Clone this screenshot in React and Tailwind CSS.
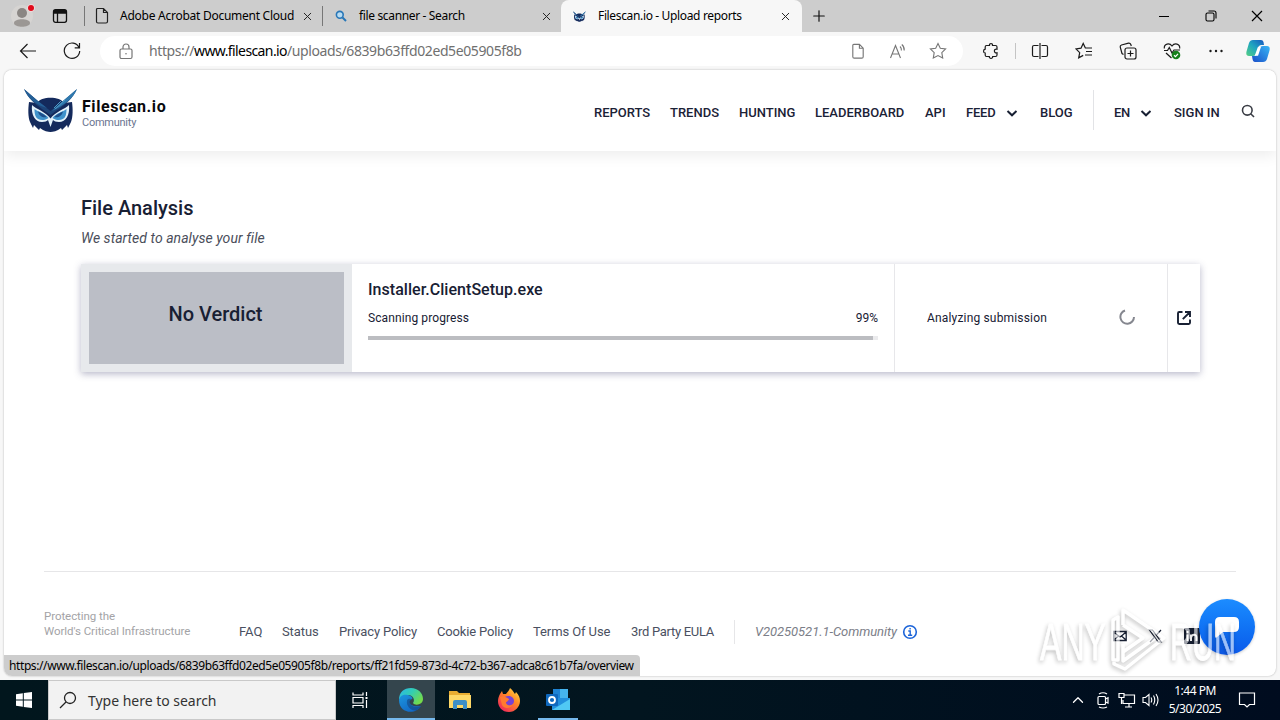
import React from 'react';
import { ChevronUp, Plus, X } from 'lucide-react';

const Owl = ({ className }) => (
  <svg className={className} viewBox="0 0 54 43" fill="none">
    <path d="M5 13 L13 14 C17 7 36 7 40 14 L48 13 C49 20 49 28 47 33 L44 39 L43 36 L38 41 L37 39 C33 42 29 43 26.5 43 C24 43 20 42 16 39 L15 41 L10 36 L9 39 L6 33 C4 28 4 20 5 13 Z" fill="#142a5c" />
    <path d="M0 0 C5 10 8 13 26.5 26 C45 13 48 10 53 0 L38 13 L26.5 22 L15 13 Z" fill="#1d4478" />
    <path d="M0 0 L14 12 L23 19 L17 17 C8 12 4 9 0 0 Z" fill="#245f96" />
    <path d="M53 0 L40 11 L28 22 C40 16 49 10 53 0 Z" fill="#2f79ae" />
    <path d="M41 11 L31 20 M37 12 L30 19" stroke="#4b9ac6" strokeWidth="1" />
    <path d="M8 16 C12 20 22 23 26.5 29.5 C31 23 41 20 45 16 C46 26 42 33 35 33 C32 33 30 32 29 31 L26.5 38 L24 31 C23 32 21 33 18 33 C11 33 7 26 8 16 Z" fill="#e4f2fa" />
    <path d="M10.5 20 C14 23 21 24 24.5 29 C21 32 13 32 11.5 27 C10.8 25 10.5 23 10.5 20 Z M42.5 20 C39 23 32 24 28.5 29 C32 32 40 32 41.500 27 C42.200 25 42.500 23 42.500 20 Z" fill="#3f92cb" />
    <path d="M14 22.500 C17 24 20 25 22.500 28 C19 29 15 27 14 22.500 Z M39 22.500 C36 24 33 25 30.500 28 C34 29 38 27 39 22.500 Z" fill="#1d4f8b" />
  </svg>
);

const Tab = ({ icon, title, className, titleClass }) => (
  <div className={`flex h-8 items-center ${className}`}>
    {icon}
    <span className={`flex-1 whitespace-nowrap text-[12px] leading-4 text-black ${titleClass}`}>{title}</span>
    <X className="h-[13px] w-[13px] text-[#222]" strokeWidth={1.8} />
  </div>
);

const PageIcon = ({ className }) => (
  <svg className={className} viewBox="0 0 16 18" fill="none" stroke="currentColor" strokeWidth="1.2">
    <path d="M3.5 1.5 h6 l4 4 v9 a1.5 1.5 0 0 1 -1.5 1.5 h-8 a1.5 1.5 0 0 1 -1.5 -1.5 v-12 a1 1 0 0 1 1 -1z M9.5 1.5 v4 h4" />
  </svg>
);

const TabStrip = () => (
  <div className="flex h-8 bg-[#cdcdcd]">
    <div className="flex w-[84px] items-center">
      <svg className="ml-[10px] h-7 w-7" viewBox="0 0 28 28">
        <circle cx="12" cy="14" r="11" fill="#d6d4d2" />
        <circle cx="12" cy="11" r="5" fill="#8a8683" />
        <path d="M4 21 c0-5 16-5 16 0 c0 5-16 5-16 0z" fill="#9b9794" />
        <circle cx="21" cy="6" r="3.8" fill="#f4dcdc" />
        <circle cx="21" cy="6" r="3" fill="#e00b1c" />
      </svg>
      <svg className="ml-[14px] h-4 w-4" viewBox="0 0 16 16" fill="none" stroke="#111" strokeWidth="1.3">
        <rect x="1.5" y="1.7" width="13" height="12.6" rx="2" />
        <path d="M1.5 5 h13 M5.5 5 v9" />
        <path d="M2 3.5 h12" strokeWidth="3" />
      </svg>
    </div>
    <div className="my-[6px] w-px bg-[#777]" />
    <Tab
      className="w-[237px] pl-[9px] pr-[8px]"
      titleClass="ml-[10px] tracking-[-0.26px]"
      title="Adobe Acrobat Document Cloud"
      icon={<PageIcon className="h-[18px] w-4 text-[#222]" />}
    />
    <div className="my-[6px] w-px bg-[#777]" />
    <Tab
      className="w-[237px] pl-[12px] pr-[7px]"
      titleClass="ml-[12px] tracking-[-0.35px]"
      title="file scanner - Search"
      icon={
        <svg className="h-3 w-3" viewBox="0 0 12 12" fill="#b9dcf2" stroke="#2877b8" strokeWidth="1.6">
          <circle cx="4.8" cy="4.8" r="3.4" />
          <path d="M7.5 7.5 L11 11" strokeWidth="2" />
        </svg>
      }
    />
    <Tab
      className="ml-px w-[241px] rounded-t-lg bg-[#f7f7f7] pl-[12px] pr-[10px]"
      titleClass="ml-[12px] tracking-[-0.35px]"
      title="Filescan.io - Upload reports"
      icon={<Owl className="h-[11px] w-[13px]" />}
    />
    <div className="flex flex-1 items-center justify-between pl-[8px]">
      <Plus className="h-[18px] w-[18px] text-[#111]" strokeWidth={1.6} />
      <div className="flex w-[122px] items-center justify-between pr-[17px] text-black">
        <svg className="h-3 w-3" viewBox="0 0 12 12" stroke="currentColor"><path d="M1 6.5 h10" /></svg>
        <svg className="h-3 w-3" viewBox="0 0 12 12" fill="none" stroke="currentColor" strokeWidth="1.1">
          <rect x="1" y="3" width="8" height="8" rx="1.5" />
          <path d="M3.5 1 h5.5 a2 2 0 0 1 2 2 v5.5" />
        </svg>
        <svg className="h-3 w-3" viewBox="0 0 12 12" stroke="currentColor" strokeWidth="1.2"><path d="M1 1 L11 11 M11 1 L1 11" /></svg>
      </div>
    </div>
  </div>
);

const STAR = 'M9 1.5 L11.3 6.3 L16.6 7 L12.8 10.7 L13.7 16 L9 13.5 L4.3 16 L5.2 10.7 L1.4 7 L6.7 6.3 Z';

const Toolbar = () => (
  <div className="flex h-[38px] items-center bg-[#f7f7f7] text-[#1b1b1b]">
    <svg className="ml-[19px] h-[18px] w-[18px]" viewBox="0 0 18 18" fill="none" stroke="currentColor" strokeWidth="1.2">
      <path d="M17 9 H1.5 M8.5 2 L1.5 9 L8.5 16" />
    </svg>
    <svg className="ml-[26px] h-[18px] w-[18px]" viewBox="0 0 18 18" fill="none" stroke="currentColor" strokeWidth="1.2">
      <path d="M16 5.5 A7.7 7.7 0 1 0 16.7 9 M16.5 1 V5.8 H11.7" />
    </svg>
    <div className="ml-[19px] flex h-[30px] w-[863px] items-center rounded-full bg-white text-[#767676]">
      <svg className="ml-[18px] h-[17px] w-4" viewBox="0 0 16 17" fill="none" stroke="currentColor" strokeWidth="1.2">
        <rect x="2" y="6" width="12" height="9.5" rx="1.5" />
        <path d="M5 6 V4 a3 3 0 0 1 6 0 V6" />
        <circle cx="8" cy="10.8" r="0.8" fill="currentColor" stroke="none" />
      </svg>
      <span className="ml-[15px] w-[372px] whitespace-nowrap text-[14px] leading-5 tracking-[-0.4px] text-[#707070]">
        https://<span className="tracking-[-0.6px] text-black">www.filescan.io</span>/uploads/6839b63ffd02ed5e05905f8b
      </span>
      <div className="ml-auto mr-[16px] flex items-center">
        <PageIcon className="h-[17px] w-4" />
        <svg className="ml-[23px] h-[18px] w-[18px]" viewBox="0 0 18 18" fill="none" stroke="currentColor" strokeWidth="1.1">
          <path d="M1.5 16 L6.5 3.5 L11.5 16 M3.2 12 h6.6 M11 4.5 q1.6 1.5 1.4 4 M12.8 2.500 q2.8 2.4 2.4 6" />
        </svg>
        <svg className="ml-[22px] h-[18px] w-[18px]" viewBox="0 0 18 18" fill="none" stroke="currentColor" strokeWidth="1.1"><path d={STAR} /></svg>
      </div>
    </div>
    <svg className="ml-[19px] h-[18px] w-[18px]" viewBox="0 0 18 18" fill="none" stroke="currentColor" strokeWidth="1.2">
      <path d="M4.5 3.5 H7.5 C7 0.8 11 0.8 10.5 3.5 H13.5 Q15 3.5 15 5 V7.2 C11.5 6.5 11.5 11.5 15 10.8 V13 Q15 14.5 13.5 14.5 H10.7 C11 17 7 17 7.3 14.5 H4.5 Q3.2 14.5 3.2 13 V11 C1 11 1 7.5 3.2 7.2 V5 Q3.2 3.5 4.5 3.5 Z" />
    </svg>
    <div className="ml-[15px] h-4 w-px bg-[#c4c4c4]" />
    <svg className="ml-[15px] h-[18px] w-[18px]" viewBox="0 0 18 18" fill="none" stroke="currentColor" strokeWidth="1.2">
      <path d="M7.5 3.5 H3 Q1.5 3.5 1.5 5 V13 Q1.5 14.5 3 14.5 H7.5 M10.5 3.5 H15 Q16.5 3.5 16.5 5 V13 Q16.5 14.5 15 14.5 H10.5 M9 1 V17" />
    </svg>
    <svg className="ml-[26px] h-[18px] w-[18px]" viewBox="0 0 18 18" fill="none" stroke="currentColor" strokeWidth="1.2">
      <path d="M10.5 6.2 L8.2 1.5 L6 6.2 L1 7 L4.7 10.6 L3.7 15.8 L8.2 13.4 M10 6 H17 M11 9.5 H17 M10 13 H17" />
    </svg>
    <svg className="ml-[26px] h-[18px] w-[18px]" viewBox="0 0 18 18" fill="none" stroke="currentColor" strokeWidth="1.2">
      <rect x="6" y="6" width="11" height="11" rx="2" />
      <path d="M11.5 8.5 v6 M8.5 11.5 h6 M4.5 12.5 L3 11.5 L1.2 5 Q1 3.5 2.5 3 L9.5 1.2 Q11.3 1 11.8 2.5 L12.3 4" />
    </svg>
    <svg className="ml-[26px] h-[18px] w-[18px]" viewBox="0 0 18 18" fill="none" stroke="currentColor" strokeWidth="1.2">
      <path d="M1.3 6.5 C0.8 1.5 6.5 0.5 9 4 C11.5 0.5 17.2 1.5 16.7 6.5 M1 8.5 H4.5 L6.3 5.5 L9 11 L11 8 H17 M3 11 L8.5 16" />
      <circle cx="13" cy="13" r="4.3" fill="#16801b" stroke="none" />
      <path d="M11 13.2 L12.5 14.6 L15 11.8" stroke="#fff" />
    </svg>
    <svg className="ml-[27px] h-[18px] w-4" viewBox="0 0 16 18" fill="currentColor">
      <circle cx="2.5" cy="9" r="1.2" /><circle cx="8" cy="9" r="1.2" /><circle cx="13.5" cy="9" r="1.2" />
    </svg>
    <svg className="ml-[22px] h-6 w-6" viewBox="0 0 24 24">
      <defs>
        <linearGradient id="cpA" x1="0" y1="1" x2="1" y2="0"><stop stopColor="#55cf83" /><stop offset=".5" stopColor="#1fa6c0" /><stop offset="1" stopColor="#1756c0" /></linearGradient>
        <linearGradient id="cpB" x1="0" y1="1" x2="1" y2="0"><stop stopColor="#1b4fc9" /><stop offset="1" stopColor="#38b6f5" /></linearGradient>
      </defs>
      <path d="M7 1 H15 Q17 1 17.5 3 L18 6 H15 Q13 6 12 9 L10.5 14 Q9.5 17 7 17 H3 Q-.5 17 .5 12.5 L3 4 Q4 1 7 1Z" fill="url(#cpA)" />
      <path d="M17 23 H9 Q7 23 6.5 20 L6 17 H8 Q11 17 12 14 L13.5 9 Q14.5 7 17 7 H21 Q24.5 7 23.5 11.5 L21 20 Q20 23 17 23Z" fill="url(#cpB)" />
      <path d="M12.500 8.500 H14 L11.500 16 H9.800 Z" fill="#fff" stroke="#fff" strokeWidth="1.500" />
    </svg>
  </div>
);

const Chevron = ({ className }) => (
  <svg className={`h-3 w-3 ${className}`} viewBox="0 0 12 12" fill="none" stroke="#182033" strokeWidth="2"><path d="M1.5 4 L6 8.3 L10.5 4" /></svg>
);

const SiteHeader = () => (
  <header className="flex h-[81px] items-start bg-white pl-5 shadow-[0_4px_14px_rgba(0,0,0,0.08)]">
    <Owl className="mt-[19px] h-[43px] w-[54px]" />
    <div className="ml-[4px] mt-[27px] font-['Roboto',sans-serif]">
      <div className="text-[16px] leading-[20px] font-bold tracking-[0.58px] text-[#08090d]">Filescan.io</div>
      <div className="text-[11px] leading-[11px] tracking-[-0.25px] text-[#6b7590]">Community</div>
    </div>
    <nav className="ml-auto mt-5 flex h-10 items-center pr-[21px] font-['Roboto',sans-serif] text-[13px] font-medium whitespace-nowrap text-[#1b2236]">
      <span className="mt-[6px] w-[76px]">REPORTS</span>
      <span className="mt-[6px] w-[69px]">TRENDS</span>
      <span className="mt-[6px] w-[76px]">HUNTING</span>
      <span className="mt-[6px] w-[110px]">LEADERBOARD</span>
      <span className="mt-[6px] w-[41px]">API</span>
      <span className="mt-[6px] w-[40px] tracking-[-0.2px]">FEED</span>
      <Chevron className="mt-[5px] mr-[22px]" />
      <span className="mt-[6px] w-[53px]">BLOG</span>
      <div className="h-10 w-px bg-[#e2e3e6]" />
      <span className="mt-[6px] ml-5 w-[26px] tracking-[-0.3px]">EN</span>
      <Chevron className="mt-[5px] mr-[22px]" />
      <span className="mt-[6px] w-[67px]">SIGN IN</span>
      <svg className="mt-[2px] h-[14px] w-[14px]" viewBox="0 0 14 14" fill="none" stroke="#3a3d45" strokeWidth="1.6">
        <circle cx="6.3" cy="6.3" r="4.8" /><path d="M9.7 9.7 L13 13" />
      </svg>
    </nav>
  </header>
);

const AnalysisCard = () => (
  <section className="ml-[77px] mt-[16px] flex h-[108px] w-[1119px] bg-white shadow-[0_2px_7px_rgba(50,50,100,0.35)]">
    <div className="w-[271px] bg-[#e7e9ec] p-2">
      <div className="flex h-[92px] items-center justify-center bg-[#bbbec6] pr-[2px] pb-2 text-[20px] font-medium text-[#182033]">No Verdict</div>
    </div>
    <div className="w-[542px] px-4 pt-4 text-[#182033]">
      <div className="text-[16px] leading-5 font-medium tracking-[0.04px] whitespace-nowrap">Installer.ClientSetup.exe</div>
      <div className="mt-[10px] flex justify-between text-[12px] leading-4">
        <span className="tracking-[0.1px]">Scanning progress</span>
        <span>99%</span>
      </div>
      <div className="mt-[10px] h-1 bg-[#ebebed]">
        <div className="h-1 w-[99%] bg-[#bcbdc1]" />
      </div>
    </div>
    <div className="flex w-[273px] items-center justify-between border-l border-[#e7e7ea] px-8 text-[12px] text-[#182033]">
      <span className="tracking-[0.17px] whitespace-nowrap">Analyzing submission</span>
      <svg className="mb-[3px] h-4 w-4" viewBox="0 0 16 16" fill="none" stroke="#85878f" strokeWidth="2">
        <path d="M6 1.5 A6.800 6.800 0 1 0 15 8" />
      </svg>
    </div>
    <div className="flex flex-1 items-center justify-center border-l border-[#e7e7ea]">
      <svg className="h-4 w-4" viewBox="0 0 16 16" fill="none" stroke="#182033" strokeWidth="1.9">
        <path d="M6.5 2 H3.2 Q2 2 2 3.2 V12.8 Q2 14 3.2 14 H12.8 Q14 14 14 12.8 V9.5 M9 2 H14 V7 M14 2 L6.8 9.2" />
      </svg>
    </div>
  </section>
);

const Footer = () => (
  <footer className="mx-10 mt-auto flex h-[105px] border-t border-[#e6e6e8] font-['Roboto',sans-serif] text-[13px] whitespace-nowrap text-[#4a5061]">
    <div className="mt-[37px] w-[195px] text-[11.5px] leading-[15px] tracking-[-0.06px] text-[#a3a3a6]">
      Protecting the
      <br />
      World's Critical Infrastructure
    </div>
    <div className="mt-[48px] flex h-6 items-center">
      <span className="w-[43px]">FAQ</span>
      <span className="w-[57px] tracking-[-0.1px]">Status</span>
      <span className="w-[98px] tracking-[-0.15px]">Privacy Policy</span>
      <span className="w-[96px] tracking-[-0.15px]">Cookie Policy</span>
      <span className="w-[98px] tracking-[-0.1px]">Terms Of Use</span>
      <span className="w-[103px] tracking-[-0.3px]">3rd Party EULA</span>
      <div className="h-6 w-px bg-[#e6e6e8]" />
      <span className="ml-5 w-[147px] tracking-[-0.06px] text-[#7b7e88] italic">V20250521.1-Community</span>
      <svg className="h-4 w-4" viewBox="0 0 16 16" fill="none" stroke="#1c64d8">
        <circle cx="8" cy="8" r="6.3" strokeWidth="1.6" />
        <path d="M6.3 7 H8.2 V11 M6 11.2 H10.2 M8.1 4 V5.5" strokeWidth="1.4" />
      </svg>
    </div>
    <div className="mt-[56px] ml-auto mr-[36px] flex h-4 items-center">
      <svg className="mr-[21px] h-[14px] w-[14px]" viewBox="0 0 14 14" fill="none" stroke="#182033" strokeWidth="1.3">
        <path d="M.8 2.5 H13.2 V11.5 H.8 Z M1 3 L5.500 7 L1 11 M13 3 L8.500 7 L13 11 M5 6.500 L7 8 L9 6.500" />
      </svg>
      <svg className="mr-[21px] h-[14px] w-[15px]" viewBox="0 0 15 14" fill="none" stroke="#182033" strokeWidth="1.2">
        <path d="M1.5 1 H4.5 L13.2 13 H10.2 Z M13 1 L8.4 6 M6.6 8 L2 13" />
      </svg>
      <svg className="h-4 w-4" viewBox="0 0 16 16">
        <rect width="16" height="16" rx="1" fill="#182033" />
        <path d="M3.5 6.5 V13 M3.5 3 V5 M7 13 V6.5 M7 10 C7 6 12.5 5.5 12.5 9.5 V13" fill="none" stroke="#fff" strokeWidth="2" />
      </svg>
    </div>
  </footer>
);

const ChatButton = () => (
  <div className="absolute right-[21px] bottom-[21px] flex h-14 w-14 items-center justify-center rounded-full bg-linear-to-b from-[#1c8cff] to-[#0d59ea] shadow-[0_1px_3px_rgba(0,0,0,0.2)]">
    <svg className="h-6 w-6" viewBox="0 0 24 24" fill="#fff">
      <path d="M5 2 H19 Q24 2 24 7 V12 Q24 17 19 17 H8 L1.500 22.500 Q0 23.500 0 21 V7 Q0 2 5 2Z" />
    </svg>
  </div>
);

const Watermark = () => (
  <div className="pointer-events-none absolute right-[26px] bottom-0 flex h-[74px] w-[212px] items-center opacity-60 drop-shadow-[-1px_2px_2px_rgba(0,0,0,0.4)]">
    <svg className="h-[74px] w-[212px]" viewBox="0 0 212 74">
      <g fill="#fff" stroke="#fff" strokeWidth="0.8" fontFamily="Liberation Sans" fontSize="52">
        <text x="2" y="58" textLength="66" lengthAdjust="spacingAndGlyphs">ANY</text>
        <text x="132" y="58" textLength="66" lengthAdjust="spacingAndGlyphs">RUN</text>
      </g>
      <path d="M75 58 V18 L80 15 V58 Z M85 23 V8 L126 36 L87 67 L76 62 V60 M85 23 L105 36 L85 50 V42 M85 50 V59 L117 36" fill="none" stroke="#fff" strokeWidth="3.5" strokeLinejoin="round" />
    </svg>
  </div>
);

const EdgeLogo = () => (
  <svg className="h-6 w-6" viewBox="0 0 24 24">
    <defs>
      <linearGradient id="edA" x1="0" y1="0" x2="1" y2="0.6"><stop stopColor="#2bb5ed" /><stop offset=".5" stopColor="#32cdb4" /><stop offset="1" stopColor="#74db4b" /></linearGradient>
      <linearGradient id="edB" x1="0" y1="0" x2="0.7" y2="1"><stop stopColor="#1c96de" /><stop offset="1" stopColor="#1266c4" /></linearGradient>
    </defs>
    <path d="M0 12 C0 4 5 0 12 0 C19 0 24 5 24 11 C24 17 16 18 14 15 C16 13 15 7 9 7 C4 7 1 10 0 12Z" fill="url(#edA)" />
    <path d="M0 12 C1 7 5 6 9 7 C13 8 14 10 13 11 C8 13 11 20 22 18 C17 27 0 26 0 12Z" fill="url(#edB)" />
    <path d="M8 13 C7 18 12 23 17 22.5 C20 21 22 19 22 18 C14 21 9 16 12 11 C9 10 8 12 8 13Z" fill="#153f78" opacity=".55" />
  </svg>
);

const Taskbar = () => (
  <div className="flex h-10 items-stretch bg-linear-to-r from-[#01161d] via-[#02151f] to-[#000c1f] text-white">
    <div className="flex w-12 items-center justify-center">
      <svg className="h-4 w-4" viewBox="0 0 16 16" fill="#fff">
        <path d="M0 2.2 L6.8 1.2 V7.5 H0Z M7.8 1 L16 0 V7.5 H7.8Z M0 8.5 H6.8 V14.8 L0 13.8Z M7.8 8.5 H16 V16 L7.8 15Z" />
      </svg>
    </div>
    <div className="flex w-[288px] items-center border border-[#c9c9c9] bg-[#f2f2f2] pl-[10px] text-[#222]">
      <svg className="h-[18px] w-[18px]" viewBox="0 0 18 18" fill="none" stroke="#222" strokeWidth="1.3">
        <circle cx="11" cy="7" r="5.5" /><path d="M7 11 L1 17" />
      </svg>
      <span className="ml-[11px] text-[14px] tracking-[-0.02px] text-[#333]">Type here to search</span>
    </div>
    <div className="flex w-[51px] items-center justify-center pr-[3px]">
      <svg className="h-[18px] w-[18px]" viewBox="0 0 18 18" fill="none" stroke="#fff" strokeWidth="1.2">
        <path d="M2 1.5 V4 H12 V1.5 M2 6.5 H12 V12 H2 Z M2 17 V14.5 H12 V17 M15.5 1 V5 M15.5 9 V17" />
        <rect x="14.5" y="6" width="2" height="2" fill="#fff" stroke="none" />
      </svg>
    </div>
    <div className="flex w-12 items-center justify-center border-b-2 border-[#76b9ed] bg-[#34454d] pt-[2px]"><EdgeLogo /></div>
    <div className="flex w-[49px] items-center justify-center">
      <svg className="h-5 w-6" viewBox="0 0 24 20">
        <path d="M1 1 H9 L11 3 H22 V18 H1 Z" fill="#e9ad32" />
        <path d="M1 5 H23 V18 H1 Z" fill="#fed867" />
        <path d="M5 19 V12 Q5 10 7 10 H17 Q19 10 19 12 V19 H15 V15 H9 V19 Z" fill="#3e8fc6" />
      </svg>
    </div>
    <div className="flex w-[49px] items-center justify-center">
      <svg className="h-6 w-6" viewBox="0 0 24 24">
        <defs><linearGradient id="ffA" x1="1" y1="0" x2="0.2" y2="1"><stop stopColor="#ffe64a" /><stop offset=".45" stopColor="#ff8a25" /><stop offset="1" stopColor="#f0255d" /></linearGradient></defs>
        <path d="M3 6 L5 3 L6 6 L9 6 C10 4 12 3 13 0 C16 2 17 5 18 6 L19 4 C22 7 23 10 23 13 C23 19 18 24 12 24 C5 24 1 19 1 13 C1 10 2 8 3 6Z" fill="url(#ffA)" />
        <path d="M8 9 C11 7 17 8 17 13 C17 17 12 19 9 17 C7 15 8 14 11 13 L8 11Z" fill="#7542d5" />
        <path d="M3 9 C6 7 9 9 12 11 C12 13 9 13 9 15 C10 18 14 18 16 16 C14 21 7 21 5 17 Z" fill="#ff7a30" />
      </svg>
    </div>
    <div className="flex w-[50px] flex-col items-center justify-between pt-[9px]">
      <svg className="h-[22px] w-6" viewBox="0 0 24 22">
        <path d="M7 0 H22 V10 H7 Z" fill="#1e83d4" />
        <path d="M14 0 H22 V9 H14 Z" fill="#45b4ee" />
        <path d="M6 9 H24 V21 H6 Z" fill="#218fdd" />
        <path d="M6 21 L24 10 V21 Z" fill="#50c8f4" />
        <rect y="5" width="12" height="12" rx="1" fill="#0f68bd" />
        <circle cx="6" cy="11" r="3" fill="none" stroke="#fff" strokeWidth="1.8" />
      </svg>
      <div className="h-[2px] w-10 bg-[#76b9ed]" />
    </div>
    <div className="ml-auto flex items-center">
      <ChevronUp className="h-[18px] w-[18px]" strokeWidth={1.7} />
      <svg className="ml-[8px] h-[18px] w-4" viewBox="0 0 16 18" fill="none" stroke="#fff" strokeWidth="1.2">
        <rect x="3" y="5.5" width="7.5" height="8" rx="1" /><path d="M10.5 8 L13 6.8 V12 L10.5 11 M4 3 Q8 .5 12 3 M4 16 Q8 18 12 16" />
      </svg>
      <svg className="ml-[7px] h-4 w-[18px]" viewBox="0 0 18 16" fill="none" stroke="#fff" strokeWidth="1.2">
        <path d="M6 3 H16.5 V11.5 H5 V8 M11 11.5 V15 M7 15 H14 M1 1.5 H6 V5.5 H1 Z M3.5 5.5 V12" />
      </svg>
      <svg className="ml-[6px] h-4 w-[18px]" viewBox="0 0 18 16" fill="none" stroke="#fff" strokeWidth="1.1">
        <path d="M1 5.5 H3.5 L7 2.5 V13.5 L3.5 10.5 H1 Z M9 5.5 Q10.5 8 9 10.5 M11.5 3.5 Q14 8 11.5 12.5 M14 2 Q18 8 14 14" />
      </svg>
      <div className="ml-[5px] w-[60px] text-center text-[12px] leading-[18px] tracking-[-0.5px] whitespace-nowrap">
        1:44 PM
        <br />
        5/30/2025
      </div>
      <svg className="ml-[13px] mr-[24px] h-[18px] w-[18px]" viewBox="0 0 18 18" fill="none" stroke="#fff" strokeWidth="1.2">
        <path d="M1.5 2 H16.5 V13.5 H11.5 L9 16 L6.5 13.5 H1.5 Z" />
      </svg>
    </div>
  </div>
);

export default function App() {
  return (
    <div className="flex h-[720px] w-[1280px] flex-col overflow-hidden bg-[#f7f7f7] font-['Noto_Sans',sans-serif]">
      <TabStrip />
      <Toolbar />
      {/* Page */}
      <main className="relative mx-1 mb-1 flex h-[606px] flex-col overflow-hidden rounded-lg bg-white shadow-[0_0_2px_rgba(0,0,0,0.3)]">
        <SiteHeader />
        <div className="font-['Roboto',sans-serif]">
          <h1 className="mt-[45px] ml-[77px] text-[20px] leading-6 font-medium text-[#182033]">File Analysis</h1>
          <p className="mt-[8px] ml-[77px] text-[14px] leading-5 tracking-[0.05px] text-[#4a4e5a] italic">We started to analyse your file</p>
          <AnalysisCard />
        </div>
        <Footer />
        <ChatButton />
        <Watermark />
        {/* Link preview */}
        <div className="absolute bottom-0 left-0 h-[21px] w-[636px] rounded-tr bg-[#cdcdcd] pl-[5px] text-[12px] leading-[21px] tracking-[-0.4px] whitespace-nowrap text-black">
          https://www.filescan.io/uploads/6839b63ffd02ed5e05905f8b/reports/ff21fd59-873d-4c72-b367-adca8c61b7fa/overview
        </div>
      </main>
      <Taskbar />
    </div>
  );
}
